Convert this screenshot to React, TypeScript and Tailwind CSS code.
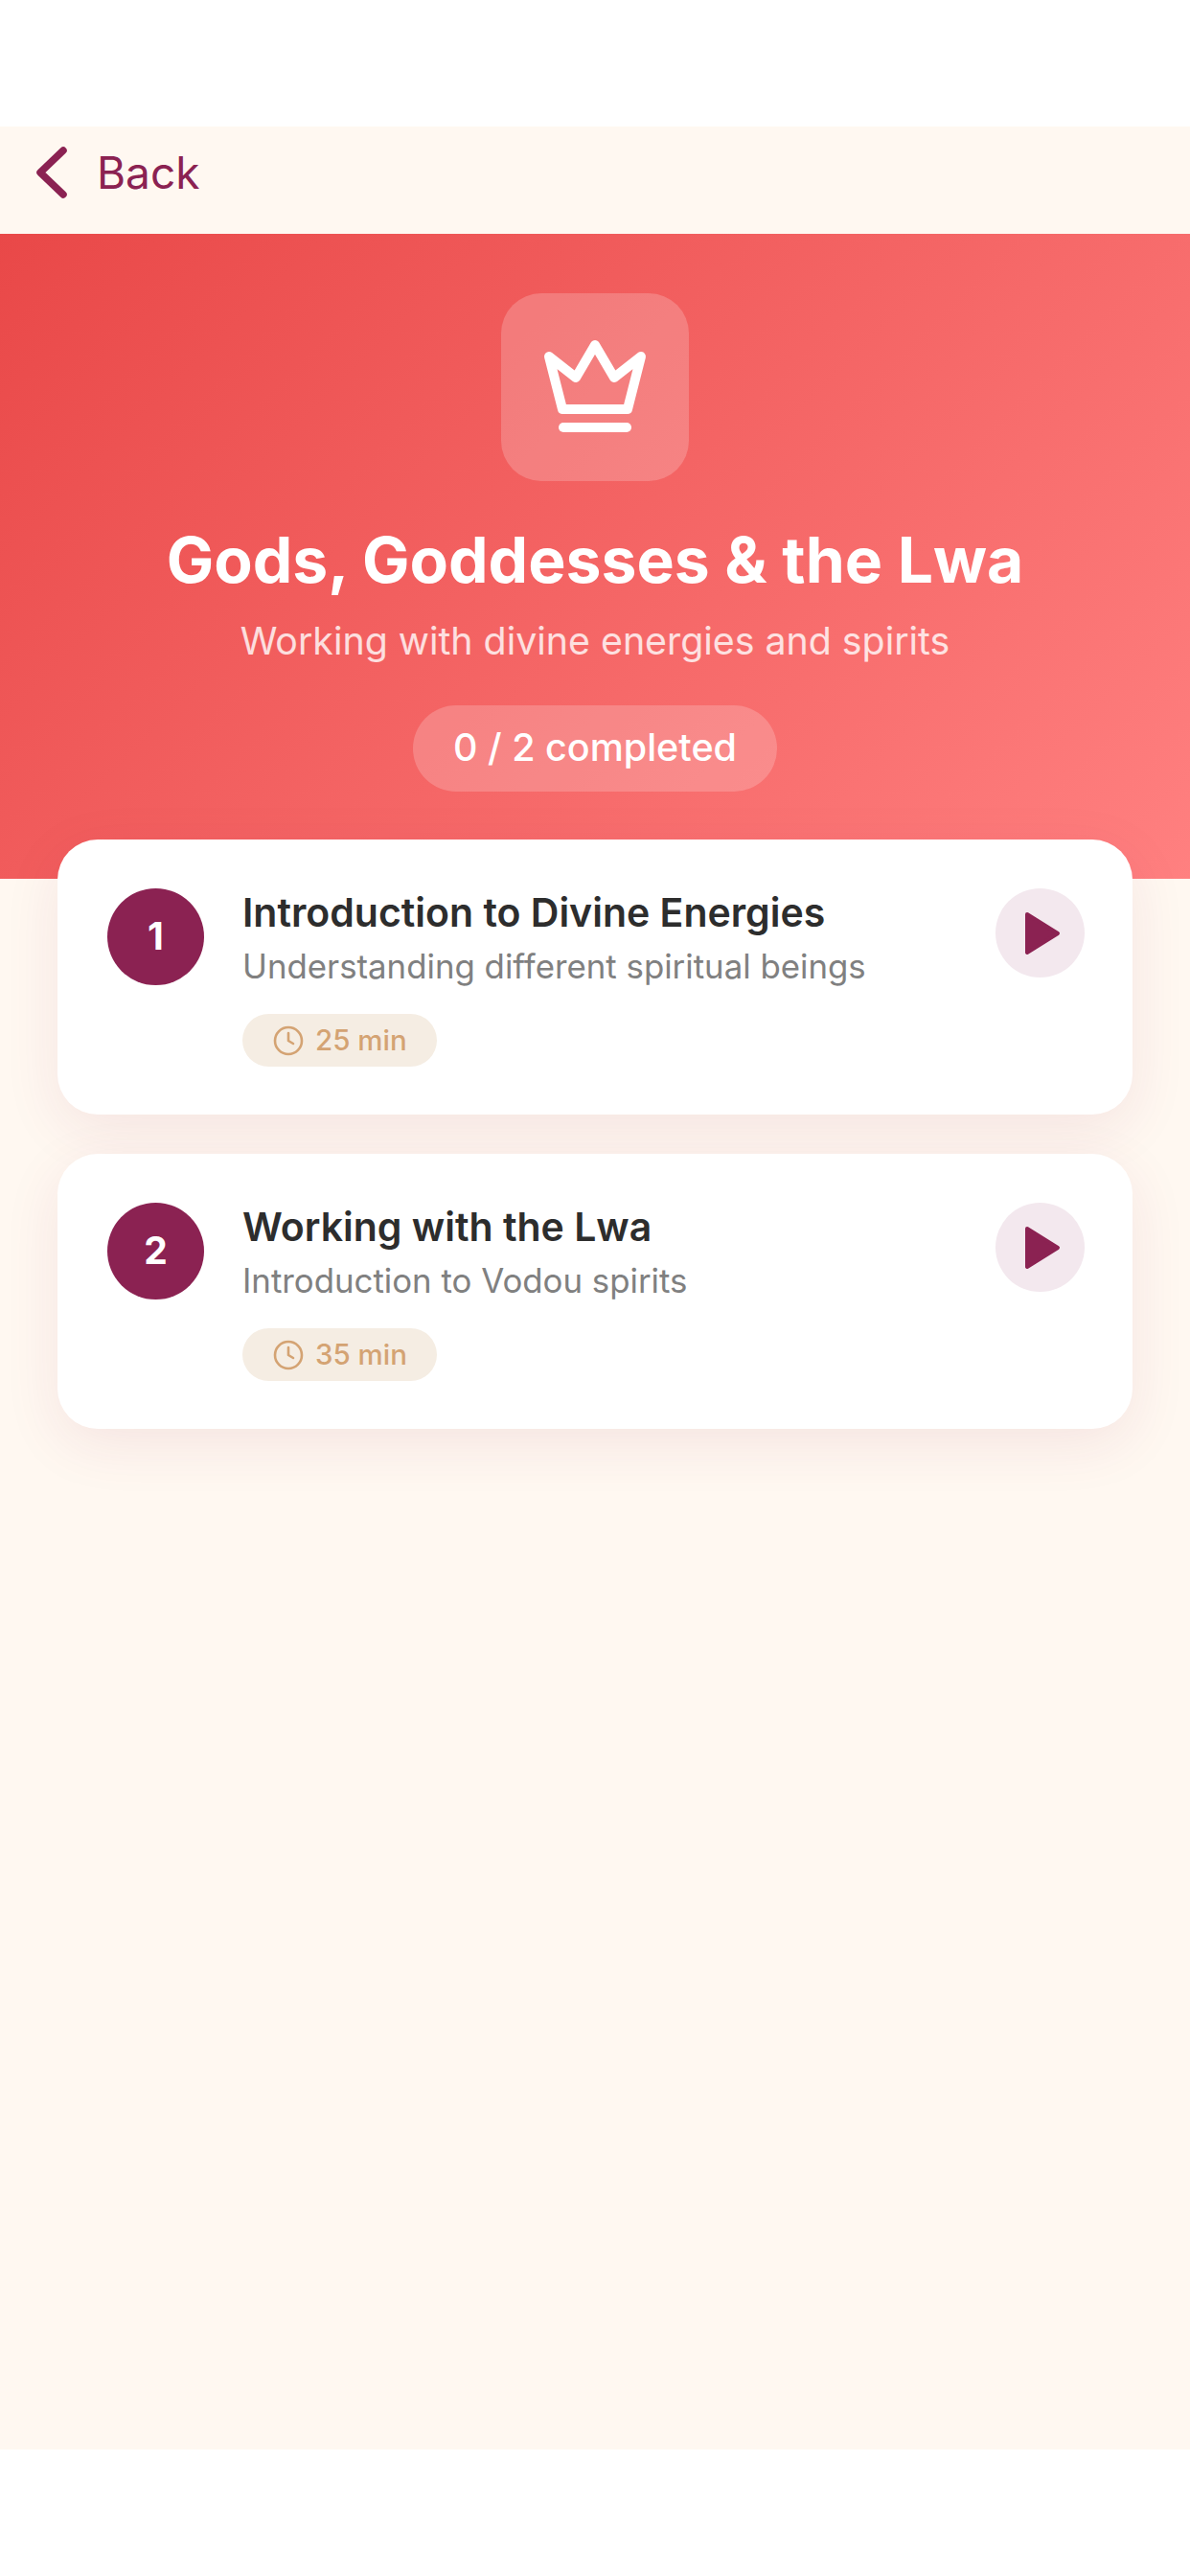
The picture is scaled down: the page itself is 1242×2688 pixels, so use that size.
import React from 'react';

const lessons = [
  { id: 1, title: 'Introduction to Divine Energies', description: 'Understanding different spiritual beings', duration: '25 min' },
  { id: 2, title: 'Working with the Lwa', description: 'Introduction to Vodou spirits', duration: '35 min' },
];

function CrownIcon() {
  return (
    <svg width="112" height="110" viewBox="0 0 112 110" fill="none" stroke="white" strokeWidth="10" strokeLinecap="round" strokeLinejoin="round">
      <path d="M8 23L36 45L56 11L76 45L104 23L90 78H22L8 23Z" />
      <path d="M23 97H89" />
    </svg>
  );
}

function ClockIcon() {
  return (
    <svg width="32" height="32" viewBox="0 0 32 32" fill="none" stroke="#d4a373" strokeWidth="2.6" strokeLinecap="round" strokeLinejoin="round">
      <circle cx="16" cy="16" r="14" />
      <path d="M16 8V16L21 19" />
    </svg>
  );
}

function LessonCard({ lesson }: { lesson: (typeof lessons)[number] }) {
  return (
    <div className="flex h-[287px] items-start rounded-[42px] bg-white pl-[52px] pr-[50px] pt-[51px] shadow-[0_16px_60px_rgba(139,31,82,0.09)]">
      <div className="flex h-[101px] w-[101px] shrink-0 items-center justify-center rounded-full bg-[#8b2252] text-[39px] font-bold text-white">
        {lesson.id}
      </div>
      <div className="ml-[40px] min-w-0 flex-1">
        <div className="text-[41px] leading-[50px] font-semibold text-[#2d2d2d]">{lesson.title}</div>
        <div className="mt-[6px] text-[34.8px] leading-[50px] text-[#808080]">{lesson.description}</div>
        <div className="mt-[25px] inline-flex h-[55px] items-center gap-[12px] rounded-full bg-[#f5ede3] pl-[32px] pr-[31px] text-[29.5px] font-medium text-[#d4a373]">
          <ClockIcon />
          <span>{lesson.duration}</span>
        </div>
      </div>
      <div className="flex h-[93px] w-[93px] shrink-0 items-center justify-center rounded-full bg-[#f3e8ee]">
        <svg width="38" height="46" viewBox="0 0 38 46" className="ml-[5px]">
          <path d="M3 3L35 23L3 43Z" fill="#8b2252" stroke="#8b2252" strokeWidth="4" strokeLinejoin="round" />
        </svg>
      </div>
    </div>
  );
}

export default function App() {
  return (
    <div className="flex h-[2688px] w-full flex-col bg-white py-[132px] font-['Inter','Liberation_Sans',sans-serif]">
      <div className="flex-1 bg-[#fff8f1]">
        <div className="flex h-[112px] items-center pb-[16px] pl-[36px]">
          <svg width="40" height="60" viewBox="0 0 40 60" fill="none" stroke="#8b2252" strokeWidth="7.5" strokeLinecap="round" strokeLinejoin="round">
            <path d="M30 7L6 30L30 53" />
          </svg>
          <span className="ml-[25px] text-[46px] text-[#8b2252]">Back</span>
        </div>

        <div className="flex h-[673px] flex-col items-center bg-linear-135/srgb from-[#e94848] to-[#ff8080] pt-[62px]">
          <div className="flex h-[196px] w-[196px] items-center justify-center rounded-[42px] bg-white/20">
            <CrownIcon />
          </div>
          <h1 className="mt-[42px] text-[66px] leading-[80px] font-bold text-white">Gods, Goddesses &amp; the Lwa</h1>
          <p className="mt-[20px] text-[39.3px] leading-[50px] text-white/80">Working with divine energies and spirits</p>
          <div className="mt-[42px] flex h-[90px] w-[380px] items-center justify-center rounded-full bg-white/20 text-[39.5px] font-medium text-white">
            0 / 2 completed
          </div>
        </div>

        <div className="mx-[60px] -mt-[41px] flex flex-col gap-[41px]">
          {lessons.map((lesson) => (
            <LessonCard key={lesson.id} lesson={lesson} />
          ))}
        </div>
      </div>
    </div>
  );
}
